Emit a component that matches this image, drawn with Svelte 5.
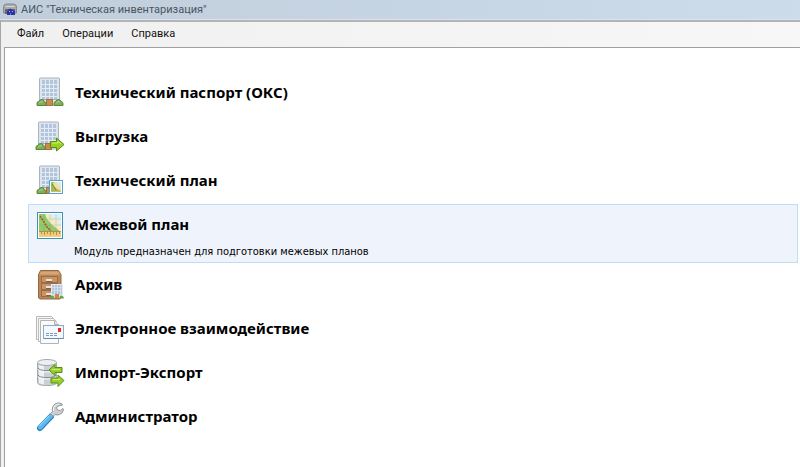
<script lang="ts">
	type Module = { id: string; title: string; description: string };

	const menu = ['Файл', 'Операции', 'Справка'];

	const modules: Module[] = [
		{ id: 'passport', title: 'Технический паспорт (ОКС)', description: '' },
		{ id: 'unload', title: 'Выгрузка', description: '' },
		{ id: 'techplan', title: 'Технический план', description: '' },
		{ id: 'survey', title: 'Межевой план', description: 'Модуль предназначен для подготовки межевых планов' },
		{ id: 'archive', title: 'Архив', description: '' },
		{ id: 'exchange', title: 'Электронное взаимодействие', description: '' },
		{ id: 'transfer', title: 'Импорт-Экспорт', description: '' },
		{ id: 'admin', title: 'Администратор', description: '' }
	];

	let selected = $state('survey');
</script>

{#snippet building()}
	<rect x="5.5" y="1" width="20" height="27" rx="1" fill="#dde4eb" stroke="#aab5c0" />
	<rect x="8" y="3" width="15" height="19" fill="#b3c5da" />
	<path d="M8 7.500h15M8 11.500h15M8 15.500h15M8 19.500h15M11.500 3v19M15.500 3v19M19.500 3v19" stroke="#e3ebf4" />
	<path d="M8 22.5h15" stroke="#a3b0be" />
	<rect x="12.5" y="22.5" width="6" height="6" fill="#cb8a49" stroke="#a57045" />
{/snippet}

{#snippet leftBush()}
	<path d="M3 28.5v-2.500q0-1.500 2-1.500 1-2.500 3-2 2 .2 2 2 2 .5 2 2v2z" fill="#7fae5a" stroke="#568a3f" />
	<path d="M5 26q2-2 4-1" fill="none" stroke="#add488" />
{/snippet}

{#snippet rightBush()}
	<path d="M20 28.500v-2q0-2 2-2 0-2 2.500-2 2 0 2.500 2 2 .5 2 2v2z" fill="#7fae5a" stroke="#568a3f" />
	<path d="M22 26q2-2 4-1" fill="none" stroke="#add488" />
{/snippet}

{#snippet map()}
	<rect x="3.500" y="3.500" width="25" height="26" fill="#fff" stroke="#3a91b5" />
	<rect x="5" y="5" width="22" height="18" fill="#dceff3" />
	<path d="M5 5h7l3 5 5 3 3 5 4 2v3H5z" fill="#93cb66" />
	<path d="M11 5h4l4 4 5 4 3 5v5l-5-4-5-4-4-5z" fill="#f8e9c6" />
	<path d="M5 10h22M5 16h22M10 5v18M16 5v18M22 5v18" stroke="#519f86" opacity=".25" />
	<path d="M6 7l4 6 3 5 4 4" fill="none" stroke="#bb4630" stroke-width="1.500" stroke-dasharray="2 1" />
	<rect x="5" y="22" width="22" height="6" fill="#efcd7c" />
	<path d="M5 22.500h22M7.500 22v3M10.500 22v4M13.500 22v3M16.500 22v4M19.500 22v3M22.500 22v4M25.500 22v3" stroke="#b58f46" />
{/snippet}

{#snippet icon(id: string)}
	<svg class="icon" viewBox="0 0 32 32" aria-hidden="true">
		{#if id === 'passport'}
			{@render building()}
			{@render leftBush()}
			{@render rightBush()}
		{:else if id === 'unload'}
			<g transform="translate(-1 0)">
				{@render building()}
				{@render leftBush()}
			</g>
			<path d="M16.500 20.500h6v-3.500l7.500 6.500-7.500 6.500v-3.500h-6z" fill="#9bd022" stroke="#528d18" stroke-linejoin="round" />
			<path d="M18 22h6v-2l3 3" fill="none" stroke="#d0ee74" />
		{:else if id === 'techplan'}
			{@render building()}
			{@render leftBush()}
			<rect x="15.500" y="15.500" width="13" height="13" fill="#fff" stroke="#57a3c9" />
			<rect x="17" y="17" width="10" height="10" fill="#d5edf5" />
			<path d="M17 17h3l2 3 3 2 2 3v2H17z" fill="#8dc561" />
			<path d="M19 18l3-1 2 3 3 3v3l-4-2-3-3z" fill="#f3dfa0" />
			<path d="M18 19l2 3 2 3" fill="none" stroke="#c2672f" />
			<path d="M17 26.500h10" stroke="#dfb65e" />
		{:else if id === 'survey'}
			{@render map()}
		{:else if id === 'archive'}
			<path d="M6.500 1.500h18l2.500 4v23.500l-1 1h-20l-1.500-1v-23.500z" fill="#bd8757" stroke="#956642" />
			<path d="M7 2.500h17l2 3H5.500z" fill="#d7a876" />
			<rect x="7.500" y="7.500" width="16" height="6" fill="#c99461" stroke="#9c6a43" />
			<rect x="7.500" y="14.500" width="16" height="6" fill="#c99461" stroke="#9c6a43" />
			<rect x="7.500" y="21.500" width="16" height="6" fill="#c99461" stroke="#9c6a43" />
			<path d="M12 11h6M12 18h5M12 25h5" stroke="#e6e4e1" stroke-width="2" />
			<path d="M12 12.500h6M12 19.500h5M12 26.500h5" stroke="#79644f" />
			<rect x="17.500" y="15.500" width="11" height="13" fill="#b5c6dc" stroke="#e4ebf2" />
			<path d="M18 18.500h10M18 21.500h10M20.500 16v9M23.500 16v9M26.500 16v9" stroke="#e2eaf3" opacity=".7" />
			<rect x="18" y="25" width="10" height="4" fill="#dbe2ea" />
			<rect x="21" y="25" width="4" height="4" fill="#c98746" />
			<path d="M15.500 29.500q0-3 3-3 2 .5 2 3zM25.500 29.500q0-3 2-3 2.500.5 2.500 3z" fill="#6fa04c" />
		{:else if id === 'exchange'}
			<path d="M2.500 3.500h15l4 4v19h-19z" fill="#f7f7f7" stroke="#b8b8b8" />
			<path d="M4.500 5.500h15l3 3v20h-18z" fill="#f7f7f7" stroke="#bdbdbd" />
			<path d="M6.500 7.500h14l4 4v19h-18z" fill="#fafafa" stroke="#b4b4b4" />
			<path d="M20.500 7.500v4h4" fill="#e3e3e3" stroke="#b4b4b4" />
			<rect x="9.500" y="12.500" width="20" height="13" fill="#f2f8fd" stroke="#8eabc5" />
			<path d="M10 25.500h19.500" stroke="#668cad" />
			<rect x="24" y="15" width="3" height="4" fill="#ed291d" />
			<path d="M12 20.500h11M12 22.500h11" stroke="#8199b3" stroke-dasharray="3 1" />
		{:else if id === 'transfer'}
			<path d="M3.500 5.500v20q0 3 9.500 3t9.500-3v-20z" fill="#cbd0d5" stroke="#a3a9af" />
			<path d="M5 8v18q2 1 5 1.500V9z" fill="#eff1f3" />
			<path d="M4 11q1 2.500 9 2.500T22 11M4 18q1 2.500 9 2.500T22 18" fill="none" stroke="#858d94" />
			<path d="M4 12.500q1 2.500 9 2.500T22 12.500M4 19.500q1 2.500 9 2.500T22 19.500" fill="none" stroke="#f7f8f9" />
			<ellipse cx="13" cy="5.500" rx="9.500" ry="3" fill="#edf0f2" stroke="#a3a9af" />
			<path d="M15 13l6-5.500v3h7v5h-7v3z" fill="#98ce28" stroke="#568f19" stroke-linejoin="round" />
			<path d="M30 23.500l-6-5.500v3h-7v5h7v3.500z" fill="#98ce28" stroke="#568f19" stroke-linejoin="round" />
			<path d="M18 12.500h8M19 22.500h7" stroke="#c9eb72" />
		{:else}
			<path d="M6 27L17 15.500" stroke="#2b82b9" stroke-width="6" stroke-linecap="round" />
			<path d="M6 26.500L17 15" stroke="#5db9ed" stroke-width="4" stroke-linecap="round" />
			<path d="M5.500 25L15 15" stroke="#a2dcfa" stroke-linecap="round" />
			<path
				d="M16.500 12.500l2-2q-1-5 2.500-7.500 3-2 6.500-.5l1 1.500-4.500 1-1.500 2 1 2 3 .5 2.500-2 .5 1q-.5 4-4 5-2.500 1-4.500 0l-2 2z"
				fill="#cbcfd2"
				stroke="#92979b"
				stroke-linejoin="round"
			/>
			<path d="M19.500 10q-1-4 2-6 2-1 4-1" fill="none" stroke="#f4f5f6" />
		{/if}
	</svg>
{/snippet}

<div class="window">
	<header class="titlebar">
		<svg class="app-icon" viewBox="0 0 14 14" aria-hidden="true">
			<path d="M.5 4q0-3 3-3h7q3 0 3 3v6h-13z" fill="#a9a9ad" stroke="#88888d" />
			<path d="M2.500 3.500h9" stroke="#d6d6d9" />
			<path d="M2 6h10v5H2z" fill="#67676e" />
			<path d="M4 8l3-2.500 5 2.500v4H4z" fill="#2735a8" />
			<path d="M6 8.500h1M9 8.500h1M7 11h1" stroke="#b7c0ef" />
		</svg>
		<span>АИС "Техническая инвентаризация"</span>
	</header>

	<div class="frame">
		<nav class="menubar">
			{#each menu as item}
				<button type="button">{item}</button>
			{/each}
		</nav>

		<main class="panel">
			{#each modules as module (module.id)}
				<button
					type="button"
					class="module"
					class:selected={selected === module.id}
					aria-pressed={selected === module.id}
					onclick={() => (selected = module.id)}
				>
					<span class="heading">
						{@render icon(module.id)}
						<span class="title">{module.title}</span>
					</span>
					{#if selected === module.id && module.description}
						<span class="description">{module.description}</span>
					{/if}
				</button>
			{/each}
		</main>
	</div>
</div>

<style>
	:global(body) {
		margin: 0;
		background: #f0f0f0;
	}

	.window {
		display: flex;
		flex-direction: column;
		min-height: 100vh;
		font-family: Roboto, 'Segoe UI', sans-serif;
		font-size: 11px;
	}

	.titlebar {
		display: flex;
		align-items: center;
		gap: 4px;
		height: 19px;
		padding-left: 3px;
		background: linear-gradient(90deg, #c0cedc, #cddcea);
		border-bottom: 1px solid #dbe4ec;
		color: #4b545e;
	}

	.app-icon {
		width: 14px;
		height: 14px;
	}

	.frame {
		flex: 1;
		display: flex;
		flex-direction: column;
		padding-left: 3px;
		border-top: 2px solid #b4b4b4;
		border-left: 1px solid #a5a5a5;
		background: #f0f0f0;
	}

	.menubar {
		display: flex;
		height: 25px;
		padding-left: 4px;
		background: linear-gradient(90deg, #f0f0f0, #f7f7f7);
	}

	.menubar button {
		padding: 0 9px 2px;
		border: 0;
		background: none;
		color: #111;
		font: inherit;
	}

	.panel {
		flex: 1;
		display: flex;
		flex-direction: column;
		padding: 23px 2px 24px 23px;
		border-top: 1px solid #a0a0a0;
		border-left: 1px solid #a0a0a0;
		background: #fff;
	}

	.module {
		display: flex;
		flex-direction: column;
		padding: 0 5px;
		border: 1px solid transparent;
		background: none;
		color: #000;
		text-align: left;
	}

	.module.selected {
		margin-top: 1px;
		padding-bottom: 3px;
		border-color: #c0dcf8;
		background: #eff3fb;
	}

	.heading {
		display: flex;
		align-items: center;
		gap: 9px;
		height: 42px;
	}

	.selected .heading {
		height: 40px;
	}

	.icon {
		flex: none;
		width: 32px;
		height: 32px;
	}

	.title {
		padding-bottom: 2px;
		font-family: 'Noto Sans', Tahoma, sans-serif;
		font-size: 15px;
		font-weight: 700;
		line-height: 20px;
	}

	.description {
		padding-left: 40px;
		font-family: 'DejaVu Sans Condensed', Tahoma, sans-serif;
		font-size: 11px;
		line-height: 14px;
	}
</style>
